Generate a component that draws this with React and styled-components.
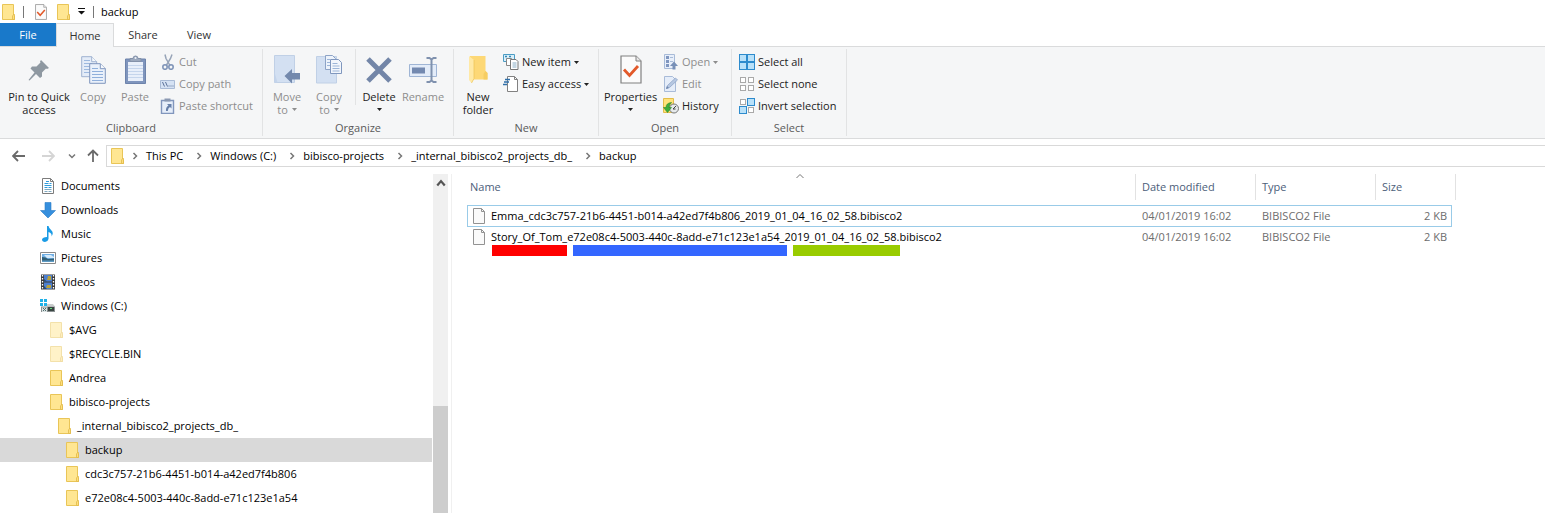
import React from "react";
import styled, { createGlobalStyle } from "styled-components";

const GlobalStyle = createGlobalStyle`
  * { box-sizing: border-box; }
  body {
    margin: 0;
    background: #fff;
    color: #000;
    font-family: "Open Sans", "Noto Sans", sans-serif;
    font-size: 11px;
    line-height: 16px;
  }
  button { font: inherit; color: inherit; border: 0; padding: 0; background: none; }
  a { color: inherit; text-decoration: none; }
  svg { display: block; flex: none; }
`;

/* ---------- icons ---------- */

const Folder = ({ faded }) => (
  <svg width="13" height="16" viewBox="0 0 13 16" opacity={faded ? 0.5 : 1}>
    <path d="M.5 .5h11v9.5l1 1.500v4H.5z" fill="#ffe692" stroke="#e9c557" />
    <path d="M10.500 15.500v-3.500l1.500-2 .5 1.500v4z" fill="#ffdf7b" stroke="#e0b94a" strokeWidth=".8" />
  </svg>
);

const CheckedPage = ({ width = 12, height = 16 }) => (
  <svg width={width} height={height} viewBox="0 0 22 29" preserveAspectRatio="none">
    <path d="M1 1h15l5 5v22H1z" fill="#fbfbfb" stroke="#808080" strokeWidth="1.200" />
    <path d="M16 1v5h5" fill="#e8e8e8" stroke="#808080" />
    <path d="M4 14.500l5.500 6 8.500-9.500" fill="none" stroke="#e2592a" strokeWidth="2.800" />
  </svg>
);

const Pin = () => (
  <svg width="22" height="22" viewBox="0 0 22 22">
    <path d="M13 1l8 8-2 1-1-.5-4 4v4l-2 1.500-4-4L1.500 21.500 .5 21l6-7.500-4-4L4 7.500h4.500l4-4-.5-1z" fill="#8e98a1" />
  </svg>
);

const CopyPages = () => (
  <svg width="25" height="28" viewBox="0 0 25 28">
    <path d="M.7 .7h10l5 5v15H.7z" fill="#e4ecf8" stroke="#9fb2d0" />
    <path d="M10.700 .7v5h5" fill="#f6f9fd" stroke="#9fb2d0" />
    <path d="M3 4.500h6M3 7.500h8M3 10.500h6M3 13.500h6M3 16.500h6" stroke="#9db9df" />
    <path d="M8.700 7.700h10.600l5 5v14.600H8.700z" fill="#eaf1fb" stroke="#7f96bd" />
    <path d="M19.300 7.700v5h5" fill="#f6f9fd" stroke="#7f96bd" />
    <path d="M11 12.500h6M11 15.500h11M11 18.500h11M11 21.500h11M11 24.500h11" stroke="#8fafdb" />
  </svg>
);

const Clipboard = () => (
  <svg width="21" height="29" viewBox="0 0 21 29">
    <path d="M.5 4h20v24.500H.5z" fill="#7f95bd" stroke="#6d83ab" />
    <path d="M3 7h15v19H3z" fill="#e8effa" />
    <path d="M3 10.500h15M3 13.500h15M3 16.500h15M3 19.500h15M3 22.500h15" stroke="#c5d5ec" />
    <path d="M5 6.500V3.500h3a2.500 2.500 0 0 1 5 0h3v3z" fill="#9ba8bd" stroke="#8391a9" />
    <circle cx="10.500" cy="3" r="1" fill="#eef2f8" />
  </svg>
);

const Scissors = () => (
  <svg width="16" height="16" viewBox="0 0 16 16" fill="none">
    <path d="M5 .5l1 4 4 7M12 .5l-1.500 4L6.500 11" stroke="#97a4b8" strokeWidth="1.500" />
    <ellipse cx="5" cy="13" rx="2.200" ry="2.300" stroke="#7f94b8" strokeWidth="1.600" />
    <ellipse cx="11" cy="13" rx="2.200" ry="2.300" stroke="#7f94b8" strokeWidth="1.600" />
  </svg>
);

const PathBox = () => (
  <svg width="16" height="16" viewBox="0 0 16 16">
    <path d="M.5 4.500h14v8H.5z" fill="#d5e2f4" stroke="#a9bbd6" />
    <path d="M2.500 6l2 4.500M5.500 6l2 4.500" stroke="#5b7199" />
    <path d="M8.500 10h1M10.500 10h1M12.500 10h1" stroke="#5b7199" />
  </svg>
);

const PasteShortcut = () => (
  <svg width="16" height="16" viewBox="0 0 16 16">
    <path d="M1.500 2.500h12v13h-12z" fill="#e6eefa" stroke="#8196bd" strokeWidth="1.400" />
    <path d="M4.500 0.500h6v3h-6z" fill="#8b99b2" />
    <path d="M6 13q-.5-4 2.500-5.500L7 6h4.500v4.500L10 9q-2 1-2.200 4z" fill="#6780aa" />
  </svg>
);

const MoveTo = () => (
  <svg width="26" height="29" viewBox="0 0 26 29">
    <path d="M.5 .5h20v27H.5z" fill="#d3e0f2" stroke="#c0d0e6" />
    <path d="M.5 27.500V17l3 10.500z" fill="#c4d4eb" />
    <path d="M10.500 21l7.500-7v4h8v6.500h-8v4z" fill="#7389ad" />
  </svg>
);

const CopyTo = () => (
  <svg width="27" height="29" viewBox="0 0 27 29">
    <path d="M.5 1.500h20v26.500H.5z" fill="#d3e0f2" stroke="#c0d0e6" />
    <path d="M9.500 .5h7l3 3v11h-10z" fill="#edf3fb" stroke="#8da3c6" />
    <path d="M14.500 4.500h8l3 3v11h-11z" fill="#f2f6fc" stroke="#8097be" />
    <path d="M11 4.500h3M11 7.500h3M11 10.500h3M16.500 8.500h5M16.500 11h7M16.500 13.500h7M16.500 16h7" stroke="#9cb5d8" />
  </svg>
);

const Cross = () => (
  <svg width="26" height="26" viewBox="0 0 26 26">
    <path d="M2 2l22 22M24 2L2 24" stroke="#7386a8" strokeWidth="5" />
  </svg>
);

const RenameIcon = () => (
  <svg width="28" height="26" viewBox="0 0 28 26">
    <path d="M.5 7.500h27v12H.5z" fill="#e3ecf9" stroke="#9fb5d5" />
    <path d="M3 10.500h13v6H3z" fill="#7389b0" />
    <path d="M17.500 1h3l2 1.500 2-1.500h3M17.500 25h3l2-1.500 2 1.500h3M22.500 2v22" fill="none" stroke="#7f91ae" strokeWidth="2" />
  </svg>
);

const NewFolderIcon = () => (
  <svg width="19" height="27" viewBox="0 0 19 27">
    <path d="M1 0h15.500v15l2 2v6.500H4L1 25z" fill="#fdd876" />
    <path d="M0 0l5 4v18.500L2.500 27 0 24z" fill="#ffe9a6" />
    <path d="M5 4v18.500L2.500 27" fill="none" stroke="#efc65a" strokeWidth=".8" />
    <path d="M14.500 23.500V18l2-3 2 2v6.500z" fill="#f6cd62" />
  </svg>
);

const NewItem = () => (
  <svg width="16" height="16" viewBox="0 0 16 16">
    <path d="M.5 .5h11v7H.5z" fill="#d9effa" stroke="#4b9cc4" />
    <path d="M2 2.500h2M6 2.500h2" stroke="#3586b4" strokeWidth="1.500" />
    <path d="M3.500 4.500h5v7h-5z" fill="#fff" stroke="#878787" />
    <path d="M7.500 5.500h5.500l2 2v8H7.500z" fill="#fff" stroke="#777" />
    <path d="M9.500 9h4M9.500 11h4M9.500 13h4" stroke="#88adc5" />
  </svg>
);

const EasyAccess = () => (
  <svg width="16" height="16" viewBox="0 0 16 16">
    <path d="M4.500 .5h7l3 3v12h-10z" fill="#fff" stroke="#818181" />
    <path d="M11.500 .5v3h3" fill="none" stroke="#818181" />
    <path d="M2 3.500h5M1 6h5M0 8.500h4" stroke="#2f6fa9" strokeWidth="1.300" />
  </svg>
);

const OpenIcon = () => (
  <svg width="16" height="16" viewBox="0 0 16 16">
    <path d="M1.500 .5h10v14h-10z" fill="#e8effa" stroke="#a8bbd8" />
    <path d="M3 2h3v3H3zM3 6h3v3H3zM3 10h3v3H3z" fill="#8097c0" />
    <path d="M7 3.500h3M7 7.500h3" stroke="#a8bbd8" />
    <path d="M7 12l4-4.500 4 4.500h-2.500v3.500h-3V12z" fill="#7890b7" />
  </svg>
);

const EditIcon = () => (
  <svg width="16" height="16" viewBox="0 0 16 16">
    <path d="M1.500 .5h8l3 3v12h-11z" fill="#e5edf9" stroke="#a8bbd8" />
    <path d="M3.500 12.500l1-3 8-7.500 2 2-8 7.500z" fill="#b6c8e2" stroke="#8fa5c8" strokeWidth=".8" />
    <path d="M3 13l3-1-2-2z" fill="#7088b0" />
  </svg>
);

const HistoryIcon = () => (
  <svg width="16" height="16" viewBox="0 0 16 16">
    <path d="M.5 .5h10v14H.5z" fill="#ffe27a" stroke="#e3bd4a" />
    <circle cx="11" cy="10.500" r="4.500" fill="#e5e9eb" stroke="#777" />
    <path d="M10 11l3-3M10 11h2.500" fill="none" stroke="#444" />
    <path d="M8.500 4.500Q3 5 3 9.500H.5L4.500 14.500l4-5H6Q6 7 8.500 4.500z" fill="#3fae3b" stroke="#2a862a" strokeWidth=".6" />
  </svg>
);

const Tiles = ({ on }) => (
  <svg width="16" height="16" viewBox="0 0 16 16">
    {[[0, 0], [8, 0], [0, 8], [8, 8]].map(([x, y], i) =>
      on[i] ? (
        <rect key={i} x={x + 0.5} y={y + 0.5} width="7" height="7" fill="#b9e1f9" stroke="#2d8bcd" />
      ) : (
        <rect key={i} x={x + 1.5} y={y + 1.5} width="5" height="5" fill="#fff" stroke="#a9a9a9" />
      )
    )}
  </svg>
);

const Arrow = ({ right, faint }) => (
  <svg width="13" height="12" viewBox="0 0 13 12" fill="none" stroke={faint ? "#d5d5d5" : "#6a6a6a"} strokeWidth="1.800">
    {right ? <path d="M0 6h11.500M7 1l5 5-5 5" /> : <path d="M13 6H1.500M6 1L1 6l5 5" />}
  </svg>
);

const UpArrow = () => (
  <svg width="12" height="13" viewBox="0 0 12 13" fill="none" stroke="#6a6a6a" strokeWidth="1.800">
    <path d="M6 13V1.500M1 6.500l5-5 5 5" />
  </svg>
);

const Chevron = ({ d, size = 8, width = 1.5, color = "#777" }) => (
  <svg width={size} height={size} viewBox="0 0 8 8" fill="none" stroke={color} strokeWidth={width}>
    <path d={d} />
  </svg>
);

const Caret = () => (
  <svg width="5" height="3" viewBox="0 0 5 3">
    <path d="M0 0h5L2.500 3z" fill="currentColor" />
  </svg>
);

const QuickMenuIcon = () => (
  <svg width="7" height="7" viewBox="0 0 7 7">
    <path d="M0 0h7v1H0zM0 3h7L3.500 6.500z" fill="#111" />
  </svg>
);

const DocumentIcon = () => (
  <svg width="16" height="16" viewBox="0 0 16 16">
    <path d="M2.500 .5h8l3 3v12h-11z" fill="#fff" stroke="#7c7c7c" />
    <path d="M10.500 .5v3h3" fill="none" stroke="#7c7c7c" />
    <path d="M6 3.500h3M4.500 5.500h4M9.500 5.500h2M4.500 7.500h7M4.500 9.500h3M8.500 9.500h3" stroke="#2f9bdb" />
    <path d="M4.500 11.500h7M4.500 13.500h3M8.500 13.500h3" stroke="#7fa9c0" />
  </svg>
);

const DownloadIcon = () => (
  <svg width="16" height="16" viewBox="0 0 16 16">
    <path d="M5 .5h6v8h4.500L8 16 .5 8.500H5z" fill="#368fdd" stroke="#2b7cc6" strokeWidth=".6" />
  </svg>
);

const MusicIcon = () => (
  <svg width="16" height="16" viewBox="0 0 16 16">
    <path d="M7 0h1.500q.5 2.500 3 4.500 2.500 2.500 0 6 .8-3.500-3-4.500v7q-.4 2.500-3.500 3Q2 15.800 2 13.500 2.500 11 7 11z" fill="#1a9be5" />
  </svg>
);

const PictureIcon = () => (
  <svg width="16" height="16" viewBox="0 0 16 16">
    <path d="M.5 2.500h15v11H.5z" fill="#fff" stroke="#8a8a8a" />
    <path d="M2 4h12v8H2z" fill="#6faee4" />
    <path d="M4 5h7l3 2v1H7z" fill="#d5eafa" />
    <path d="M2 7q4 0 6 2l6-.5V12H2z" fill="#315f76" />
    <path d="M2 10.500h12V12H2z" fill="#5e9bc4" />
  </svg>
);

const VideoIcon = () => (
  <svg width="16" height="16" viewBox="0 0 16 16">
    <path d="M1 .5h14v15H1z" fill="#3a3a3a" />
    <path d="M4 1h8v6.500H4zM4 8.500h8V15H4z" fill="#4c7fd0" />
    <path d="M8 2h3v4H7zM7 11h4v3H6z" fill="#b9a13a" />
    <path d="M4 5l3 2.500H4zM4 12l3 3H4z" fill="#254a7b" />
    <path d="M2.500 1v15M13.500 1v15" stroke="#fff" strokeWidth="1.300" strokeDasharray="1.500 1.500" />
  </svg>
);

const DriveIcon = () => (
  <svg width="16" height="16" viewBox="0 0 16 16">
    <path d="M0 1h3v3H0zM4 1h3v3H4zM0 5h3v3H0zM4 5h3v3H4z" fill="#1fb1e8" />
    <path d="M7 6h6l2 2.500H7z" fill="#c9cccc" />
    <path d="M1 8.500h14V14H1z" fill="#8b9192" />
    <path d="M8 9h6v4H8z" fill="#3a4542" />
    <path d="M10 10.500h2" stroke="#62d67c" />
    <path d="M2 9.500h5V14H2z" fill="#dbe2e2" />
    <path d="M3 13l3-3M3 10l3 3" stroke="#4f6d6e" />
  </svg>
);

const FileIcon = () => (
  <svg width="12" height="16" viewBox="0 0 12 16">
    <path d="M.5 .5h8l3 3v12H.5z" fill="#fafafa" stroke="#929292" />
    <path d="M8.500 .5v3h3" fill="none" stroke="#929292" />
  </svg>
);

/* ---------- window ---------- */

const Window = styled.div`
  display: flex;
  flex-direction: column;
  height: 100vh;
  overflow: hidden;
`;

const TitleBar = styled.header`
  display: flex;
  align-items: center;
  height: 23px;
  padding-left: 2px;
`;

const TitleRule = styled.span`
  width: 1px;
  height: 12px;
  margin: 0 ${(p) => p.$after}px 0 8px;
  background: #777;
`;

const QuickButton = styled.button`
  margin-right: ${(p) => p.$gap || 0}px;
`;

const WindowTitle = styled.h1`
  margin: 0;
  font-size: 11px;
  font-weight: 400;
`;

const TabStrip = styled.nav`
  display: flex;
  height: 24px;
  border-bottom: 1px solid #dadbdc;
`;

const Tab = styled.button`
  height: ${(p) => (p.$active ? 24 : 23)}px;
  width: ${(p) => p.$width}px;
  color: ${(p) => (p.$file ? "#fff" : "#333")};
  background: ${(p) => (p.$file ? "#1979ca" : p.$active ? "#f5f6f7" : "transparent")};
  border: solid ${(p) => (p.$active ? "#dadbdc" : "transparent")};
  border-width: ${(p) => (p.$active ? "1px 1px 0" : "0")};
`;

const Ribbon = styled.section`
  display: flex;
  height: 92px;
  padding: 2px 0;
  background: #f5f6f7;
  border-bottom: 1px solid #dadbdc;
`;

const Group = styled.div`
  display: flex;
  flex-direction: column;
  width: ${(p) => p.$width}px;
  padding-left: ${(p) => p.$inset}px;
  border-right: 1px solid #e2e3e4;
`;

const GroupTools = styled.div`
  display: flex;
  height: 73px;
`;

const GroupLabel = styled.div`
  margin-left: -${(p) => p.$inset}px;
  text-align: center;
  color: #5a5a5a;
`;

const GroupRule = styled.span`
  width: 1px;
  height: 56px;
  margin-left: 5px;
  background: #e2e3e4;
`;

const LargeButton = styled.button`
  display: flex;
  flex-direction: column;
  align-items: center;
  width: ${(p) => p.$width}px;
  line-height: 13px;
  white-space: nowrap;
  color: ${(p) => (p.$dim ? "#8d8d8d" : "#222")};
`;

const LargeIcon = styled.span`
  display: flex;
  align-items: center;
  height: 41px;
`;

const CaretLine = styled.span`
  display: flex;
  align-items: center;
  gap: 4px;
  height: 13px;
`;

const SmallTools = styled.div`
  display: flex;
  flex-direction: column;
  padding: 2px 0 0 ${(p) => p.$left}px;
`;

const SmallButton = styled.button`
  display: flex;
  align-items: center;
  gap: 3px;
  height: 22px;
  white-space: nowrap;
  color: ${(p) => (p.$dim ? "#8d8d8d" : "#222")};
`;

const AddressRow = styled.div`
  display: flex;
  align-items: center;
  height: 35px;
  padding: 0 0 2px 12px;
`;

const NavButton = styled.button`
  margin-right: ${(p) => p.$gap}px;
`;

const Crumbs = styled.nav`
  display: flex;
  align-items: center;
  flex: 1;
  height: 22px;
  padding-left: 4px;
  border: 1px solid #d9d9d9;
  border-right: 0;
`;

const Crumb = styled.a`
  padding-right: 5px;
`;

const Separator = styled.span`
  display: flex;
  justify-content: center;
  width: 22px;
`;

const Body = styled.main`
  display: flex;
  flex: 1;
  min-height: 0;
`;

const Tree = styled.ul`
  flex: none;
  width: 432px;
  margin: 0 1px 0 0;
  padding: 0;
  list-style: none;
`;

const TreeLink = styled.a`
  display: flex;
  align-items: center;
  gap: ${(p) => (p.$top ? 5 : 6)}px;
  height: 24px;
  padding-left: ${(p) => p.$indent}px;
  background: ${(p) => (p.$selected ? "#d9d9d9" : "transparent")};
`;

const Scrollbar = styled.div`
  display: flex;
  flex-direction: column;
  flex: none;
  width: 15px;
  background: #f0f0f0;
`;

const ScrollUp = styled.button`
  display: flex;
  justify-content: center;
  align-items: center;
  height: 17px;
`;

const ScrollSpace = styled.div`
  flex: 215;
`;

const ScrollThumb = styled.div`
  flex: 107;
  background: #cdcdcd;
`;

const Files = styled.section`
  flex: 1;
  min-width: 0;
  margin-left: 3px;
  padding: 0 89px 0 15px;
  border-left: 1px solid #f0f0f0;
`;

const FileTable = styled.table`
  display: block;
`;

const Section = styled.thead`
  display: block;
`;

const HeadRow = styled.tr`
  display: grid;
  grid-template-columns: 1fr 120px 120px 80px;
  height: 26px;
  margin-bottom: 5px;
`;

const HeadCell = styled.th`
  position: relative;
  padding: 5px 0 0 ${(p) => (p.$first ? 3 : 6)}px;
  border-right: 1px solid #e2e2e2;
  text-align: left;
  font-weight: 400;
  color: #4c607a;
`;

const SortMark = styled.span`
  position: absolute;
  top: -2px;
  left: 50%;
  margin-left: -5px;
`;

const FileRow = styled.tr`
  display: grid;
  grid-template-columns: 1fr 120px 120px 76px;
  align-items: center;
  height: ${(p) => (p.$focused ? 22 : 20)}px;
  margin-right: 4px;
  border: 1px solid ${(p) => (p.$focused ? "#99cbe8" : "transparent")};
  border-width: ${(p) => (p.$focused ? "1px" : "0 1px")};
`;

const Cell = styled.td`
  padding: 0 ${(p) => (p.$right ? 4 : 0)}px 0 7px;
  text-align: ${(p) => (p.$right ? "right" : "left")};
  color: #6d6d6d;
`;

const NameCell = styled(Cell)`
  position: relative;
  display: flex;
  gap: 6px;
  padding-left: 5px;
  color: #000;
`;

const Marks = styled.span`
  position: absolute;
  top: 16px;
  left: 24px;
  display: flex;
  gap: 6px;
`;

const Mark = styled.span`
  width: ${(p) => p.$width}px;
  height: 11px;
  background: ${(p) => p.$color};
`;

const Large = ({ icon, width, dim, lines, caret }) => (
  <LargeButton type="button" $width={width} $dim={dim} disabled={dim}>
    <LargeIcon>{icon}</LargeIcon>
    <span>{lines[0]}</span>
    {(lines[1] || caret) && (
      <CaretLine>
        {lines[1]}
        {caret && <Caret />}
      </CaretLine>
    )}
  </LargeButton>
);

const Small = ({ icon, dim, caret, children }) => (
  <SmallButton type="button" $dim={dim} disabled={dim}>
    {icon}
    {children}
    {caret && <Caret />}
  </SmallButton>
);

const RibbonGroup = ({ width, inset, label, children }) => (
  <Group $width={width} $inset={inset}>
    <GroupTools>{children}</GroupTools>
    <GroupLabel $inset={inset}>{label}</GroupLabel>
  </Group>
);

const crumbs = ["This PC", "Windows (C:)", "bibisco-projects", "_internal_bibisco2_projects_db_", "backup"];

const tree = [
  { label: "Documents", icon: <DocumentIcon />, indent: 40, top: true },
  { label: "Downloads", icon: <DownloadIcon />, indent: 40, top: true },
  { label: "Music", icon: <MusicIcon />, indent: 40, top: true },
  { label: "Pictures", icon: <PictureIcon />, indent: 40, top: true },
  { label: "Videos", icon: <VideoIcon />, indent: 40, top: true },
  { label: "Windows (C:)", icon: <DriveIcon />, indent: 40, top: true },
  { label: "$AVG", icon: <Folder faded />, indent: 50 },
  { label: "$RECYCLE.BIN", icon: <Folder faded />, indent: 50 },
  { label: "Andrea", icon: <Folder />, indent: 50 },
  { label: "bibisco-projects", icon: <Folder />, indent: 50 },
  { label: "_internal_bibisco2_projects_db_", icon: <Folder />, indent: 58 },
  { label: "backup", icon: <Folder />, indent: 66, selected: true },
  { label: "cdc3c757-21b6-4451-b014-a42ed7f4b806", icon: <Folder />, indent: 66 },
  { label: "e72e08c4-5003-440c-8add-e71c123e1a54", icon: <Folder />, indent: 66 },
];

const files = [
  { name: "Emma_cdc3c757-21b6-4451-b014-a42ed7f4b806_2019_01_04_16_02_58.bibisco2", focused: true },
  { name: "Story_Of_Tom_e72e08c4-5003-440c-8add-e71c123e1a54_2019_01_04_16_02_58.bibisco2", marked: true },
];

export default function App() {
  return (
    <Window>
      <GlobalStyle />
      <TitleBar>
        <Folder />
        <TitleRule $after={11} />
        <QuickButton type="button" aria-label="Properties" $gap={10}><CheckedPage /></QuickButton>
        <QuickButton type="button" aria-label="New folder" $gap={8}><Folder /></QuickButton>
        <QuickButton type="button" aria-label="Customize toolbar"><QuickMenuIcon /></QuickButton>
        <TitleRule $after={7} />
        <WindowTitle>backup</WindowTitle>
      </TitleBar>
      <TabStrip>
        <Tab type="button" $file $width={56}>File</Tab>
        <Tab type="button" $active $width={58}>Home</Tab>
        <Tab type="button" $width={58}>Share</Tab>
        <Tab type="button" $width={54}>View</Tab>
      </TabStrip>
      <Ribbon>
        <RibbonGroup width={263} inset={4} label="Clipboard">
          <Large icon={<Pin />} width={70} lines={["Pin to Quick", "access"]} />
          <Large icon={<CopyPages />} width={38} dim lines={["Copy"]} />
          <Large icon={<Clipboard />} width={46} dim lines={["Paste"]} />
          <SmallTools $left={2}>
            <Small icon={<Scissors />} dim>Cut</Small>
            <Small icon={<PathBox />} dim>Copy path</Small>
            <Small icon={<PasteShortcut />} dim>Paste shortcut</Small>
          </SmallTools>
        </RibbonGroup>
        <RibbonGroup width={191} inset={3} label="Organize">
          <Large icon={<MoveTo />} width={42} dim caret lines={["Move", "to"]} />
          <Large icon={<CopyTo />} width={42} dim caret lines={["Copy", "to"]} />
          <GroupRule />
          <Large icon={<Cross />} width={46} caret lines={["Delete"]} />
          <Large icon={<RenameIcon />} width={42} dim lines={["Rename"]} />
        </RibbonGroup>
        <RibbonGroup width={145} inset={4} label="New">
          <Large icon={<NewFolderIcon />} width={40} lines={["New", "folder"]} />
          <SmallTools $left={5}>
            <Small icon={<NewItem />} caret>New item</Small>
            <Small icon={<EasyAccess />} caret>Easy access</Small>
          </SmallTools>
        </RibbonGroup>
        <RibbonGroup width={133} inset={3} label="Open">
          <Large icon={<CheckedPage width={22} height={29} />} width={57} caret lines={["Properties"]} />
          <SmallTools $left={4}>
            <Small icon={<OpenIcon />} dim caret>Open</Small>
            <Small icon={<EditIcon />} dim>Edit</Small>
            <Small icon={<HistoryIcon />}>History</Small>
          </SmallTools>
        </RibbonGroup>
        <RibbonGroup width={115} inset={7} label="Select">
          <SmallTools $left={0}>
            <Small icon={<Tiles on={[1, 1, 1, 1]} />}>Select all</Small>
            <Small icon={<Tiles on={[0, 0, 0, 0]} />}>Select none</Small>
            <Small icon={<Tiles on={[0, 1, 1, 0]} />}>Invert selection</Small>
          </SmallTools>
        </RibbonGroup>
      </Ribbon>
      <AddressRow>
        <NavButton type="button" aria-label="Back" $gap={17}><Arrow /></NavButton>
        <NavButton type="button" aria-label="Forward" $gap={13}><Arrow right faint /></NavButton>
        <NavButton type="button" aria-label="Recent locations" $gap={11}><Chevron d="M1 2.500l3 3 3-3" /></NavButton>
        <NavButton type="button" aria-label="Up" $gap={7}><UpArrow /></NavButton>
        <Crumbs aria-label="Address">
          <Folder />
          {crumbs.map((c) => (
            <React.Fragment key={c}>
              <Separator><Chevron d="M2.500 1l3 3-3 3" /></Separator>
              <Crumb href="#">{c}</Crumb>
            </React.Fragment>
          ))}
        </Crumbs>
      </AddressRow>
      <Body>
        <Tree>
          {tree.map((t) => (
            <li key={t.label}>
              <TreeLink href="#" $indent={t.indent} $top={t.top} $selected={t.selected}>
                {t.icon}
                {t.label}
              </TreeLink>
            </li>
          ))}
        </Tree>
        <Scrollbar>
          <ScrollUp type="button" aria-label="Scroll up">
            <Chevron d="M1 6l3-3.500L7 6" size={10} width={1.8} color="#555" />
          </ScrollUp>
          <ScrollSpace />
          <ScrollThumb />
        </Scrollbar>
        <Files>
          <FileTable>
            <Section>
              <HeadRow>
                <HeadCell $first>
                  Name
                  <SortMark><Chevron d="M.5 6L4 2.500 7.500 6" width={1} /></SortMark>
                </HeadCell>
                <HeadCell>Date modified</HeadCell>
                <HeadCell>Type</HeadCell>
                <HeadCell>Size</HeadCell>
              </HeadRow>
            </Section>
            <Section as="tbody">
              {files.map((f) => (
                <FileRow key={f.name} $focused={f.focused}>
                  <NameCell>
                    <FileIcon />
                    {f.name}
                    {f.marked && (
                      <Marks>
                        <Mark $width={75} $color="#ff0000" />
                        <Mark $width={214} $color="#3366ff" />
                        <Mark $width={107} $color="#99cc00" />
                      </Marks>
                    )}
                  </NameCell>
                  <Cell>04/01/2019 16:02</Cell>
                  <Cell>BIBISCO2 File</Cell>
                  <Cell $right>2 KB</Cell>
                </FileRow>
              ))}
            </Section>
          </FileTable>
        </Files>
      </Body>
    </Window>
  );
}
